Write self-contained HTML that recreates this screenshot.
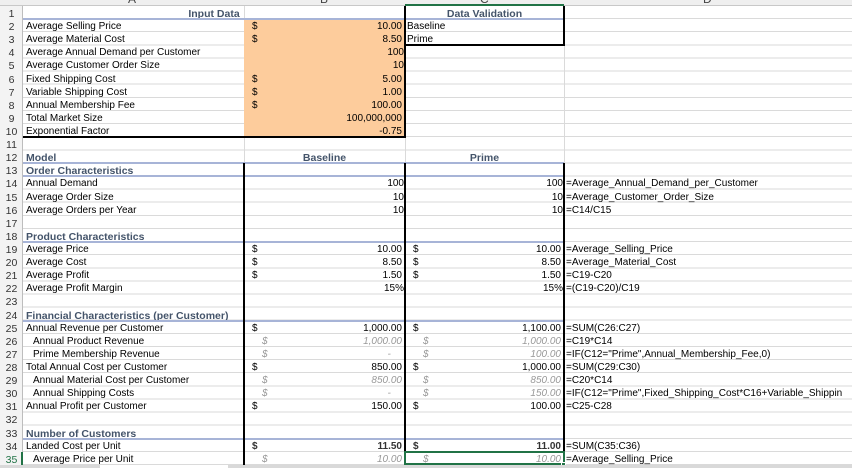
<!DOCTYPE html>
<html><head><meta charset="utf-8"><style>
*{margin:0;padding:0;box-sizing:border-box}
body{width:852px;height:468px;overflow:hidden;background:#fff;font-family:"Liberation Sans",Arial,sans-serif;font-size:10px;color:#000;position:relative}
#hdr{position:absolute;left:0;top:0;width:852px;height:6px;background:#efefef;border-bottom:1px solid #c8c8c8;overflow:hidden}
#hdr span{position:absolute;top:-8px;font-size:12px;color:#444}
#rh{position:absolute;left:0;top:6px;width:23px;height:459px;background:#f3f3f3;border-right:1px solid #bdbdbd}
#lines{position:absolute;left:23px;top:6px;width:829px;height:459px;background:repeating-linear-gradient(to bottom,transparent 0,transparent 12.114px,#dadada 12.114px,#dadada 13.114px)}
.v{position:absolute;top:6px;height:459px;width:1px;background:#dadada}
#g{position:absolute;left:0;top:7px;display:grid;grid-template-columns:23px 221px 161px 159px 288px;grid-auto-rows:13.114px;width:852px}
#g>div{white-space:nowrap;line-height:14px;overflow:visible;position:relative}
.n{text-align:center;color:#333;font-size:10.5px}
.a{padding-left:3px}
.in{padding-left:10px}
.h{font-weight:bold;color:#44546a;padding-left:3px;font-size:10.5px}
.c{text-align:center;font-weight:bold;color:#44546a;font-size:10.5px}
.r{text-align:right;padding-right:3px}
.r0{text-align:right;padding-right:1px}
.d{position:absolute;left:8px;top:0}
.i{font-style:italic;color:#999}
.i .d{left:18px}
.b{font-weight:bold}
.f{padding-left:2px}
.o{background:#fdcc9c}
.k{position:absolute;background:#000}
.bl{position:absolute;height:2px;background:#a7b4d7}
</style></head><body>
<div id="hdr"><span style="left:128px">A</span><span style="left:320px">B</span><span style="left:480px">C</span><span style="left:703px">D</span></div>
<div style="position:absolute;left:405px;top:4px;width:159px;height:2px;background:#217346"></div>
<div id="rh"></div>
<div id="lines"></div>
<div class="v" style="left:244px"></div><div class="v" style="left:405px"></div><div class="v" style="left:564px"></div>
<div style="position:absolute;left:244px;top:19px;width:161px;height:118px" class="o"></div>
<div style="position:absolute;left:21px;top:452px;width:2px;height:13px;background:#217346"></div>
<div id="g">
<div class="n">1</div><div class="c" style="grid-column:2/4">Input Data</div><div class="c">Data Validation</div><div></div>
<div class="n">2</div><div class="a">Average Selling Price</div><div class="r"><span class="d">$</span>10.00</div><div class="f">Baseline</div><div></div>
<div class="n">3</div><div class="a">Average Material Cost</div><div class="r"><span class="d">$</span>8.50</div><div class="f">Prime</div><div></div>
<div class="n">4</div><div class="a">Average Annual Demand per Customer</div><div class="r0">100</div><div></div><div></div>
<div class="n">5</div><div class="a">Average Customer Order Size</div><div class="r0">10</div><div></div><div></div>
<div class="n">6</div><div class="a">Fixed Shipping Cost</div><div class="r"><span class="d">$</span>5.00</div><div></div><div></div>
<div class="n">7</div><div class="a">Variable Shipping Cost</div><div class="r"><span class="d">$</span>1.00</div><div></div><div></div>
<div class="n">8</div><div class="a">Annual Membership Fee</div><div class="r"><span class="d">$</span>100.00</div><div></div><div></div>
<div class="n">9</div><div class="a">Total Market Size</div><div class="r">100,000,000</div><div></div><div></div>
<div class="n">10</div><div class="a">Exponential Factor</div><div class="r">-0.75</div><div></div><div></div>
<div class="n">11</div><div></div><div></div><div></div><div></div>
<div class="n">12</div><div class="h">Model</div><div class="c">Baseline</div><div class="c">Prime</div><div></div>
<div class="n">13</div><div class="h">Order Characteristics</div><div></div><div></div><div></div>
<div class="n">14</div><div class="a">Annual Demand</div><div class="r0">100</div><div class="r0">100</div><div class="f">=Average_Annual_Demand_per_Customer</div>
<div class="n">15</div><div class="a">Average Order Size</div><div class="r0">10</div><div class="r0">10</div><div class="f">=Average_Customer_Order_Size</div>
<div class="n">16</div><div class="a">Average Orders per Year</div><div class="r0">10</div><div class="r0">10</div><div class="f">=C14/C15</div>
<div class="n">17</div><div></div><div></div><div></div><div></div>
<div class="n">18</div><div class="h">Product Characteristics</div><div></div><div></div><div></div>
<div class="n">19</div><div class="a">Average Price</div><div class="r"><span class="d">$</span>10.00</div><div class="r"><span class="d">$</span>10.00</div><div class="f">=Average_Selling_Price</div>
<div class="n">20</div><div class="a">Average Cost</div><div class="r"><span class="d">$</span>8.50</div><div class="r"><span class="d">$</span>8.50</div><div class="f">=Average_Material_Cost</div>
<div class="n">21</div><div class="a">Average Profit</div><div class="r"><span class="d">$</span>1.50</div><div class="r"><span class="d">$</span>1.50</div><div class="f">=C19-C20</div>
<div class="n">22</div><div class="a">Average Profit Margin</div><div class="r0">15%</div><div class="r0">15%</div><div class="f">=(C19-C20)/C19</div>
<div class="n">23</div><div></div><div></div><div></div><div></div>
<div class="n">24</div><div class="h">Financial Characteristics (per Customer)</div><div></div><div></div><div></div>
<div class="n">25</div><div class="a">Annual Revenue per Customer</div><div class="r"><span class="d">$</span>1,000.00</div><div class="r"><span class="d">$</span>1,100.00</div><div class="f">=SUM(C26:C27)</div>
<div class="n">26</div><div class="in">Annual Product Revenue</div><div class="r i"><span class="d">$</span>1,000.00</div><div class="r i"><span class="d">$</span>1,000.00</div><div class="f">=C19*C14</div>
<div class="n">27</div><div class="in">Prime Membership Revenue</div><div class="r i"><span class="d">$</span>-&nbsp;&nbsp;&nbsp;&nbsp;</div><div class="r i"><span class="d">$</span>100.00</div><div class="f">=IF(C12="Prime",Annual_Membership_Fee,0)</div>
<div class="n">28</div><div class="a">Total Annual Cost per Customer</div><div class="r"><span class="d">$</span>850.00</div><div class="r"><span class="d">$</span>1,000.00</div><div class="f">=SUM(C29:C30)</div>
<div class="n">29</div><div class="in">Annual Material Cost per Customer</div><div class="r i"><span class="d">$</span>850.00</div><div class="r i"><span class="d">$</span>850.00</div><div class="f">=C20*C14</div>
<div class="n">30</div><div class="in">Annual Shipping Costs</div><div class="r i"><span class="d">$</span>-&nbsp;&nbsp;&nbsp;&nbsp;</div><div class="r i"><span class="d">$</span>150.00</div><div class="f">=IF(C12="Prime",Fixed_Shipping_Cost*C16+Variable_Shippin</div>
<div class="n">31</div><div class="a">Annual Profit per Customer</div><div class="r"><span class="d">$</span>150.00</div><div class="r"><span class="d">$</span>100.00</div><div class="f">=C25-C28</div>
<div class="n">32</div><div></div><div></div><div></div><div></div>
<div class="n">33</div><div class="h">Number of Customers</div><div></div><div></div><div></div>
<div class="n">34</div><div class="a">Landed Cost per Unit</div><div class="r b" style="color:#333"><span class="d">$</span>11.50</div><div class="r b" style="color:#333"><span class="d">$</span>11.00</div><div class="f">=SUM(C35:C36)</div>
<div class="n" style="color:#217346">35</div><div class="in">Average Price per Unit</div><div class="r i"><span class="d">$</span>10.00</div><div class="r i"><span class="d">$</span>10.00</div><div class="f">=Average_Selling_Price</div>
</div>
<div class="bl" style="left:23px;top:18px;width:541px"></div>
<div class="bl" style="left:23px;top:162px;width:541px"></div>
<div class="bl" style="left:23px;top:175px;width:541px"></div>
<div class="bl" style="left:23px;top:241px;width:541px"></div>
<div class="bl" style="left:23px;top:320px;width:541px"></div>
<div class="bl" style="left:23px;top:438px;width:541px"></div>
<div class="k" style="left:23px;top:136px;width:383px;height:2px"></div>
<div class="k" style="left:404px;top:45px;width:2px;height:93px"></div>
<div class="k" style="left:404px;top:6px;width:2px;height:40px"></div>
<div class="k" style="left:563px;top:6px;width:2px;height:40px"></div>
<div class="k" style="left:404px;top:44px;width:161px;height:2px"></div>
<div class="k" style="left:243px;top:163px;width:2px;height:302px"></div>
<div class="k" style="left:404px;top:163px;width:2px;height:302px"></div>
<div class="k" style="left:563px;top:163px;width:2px;height:302px"></div>
<div style="position:absolute;left:404px;top:451px;width:161px;height:14px;border:2px solid #217346"></div>
<div style="position:absolute;left:561px;top:462px;width:5px;height:5px;background:#217346;border:1px solid #fff"></div>
<div style="position:absolute;left:0;top:465px;width:852px;height:3px;background:#d9d9d9"></div>
<div style="position:absolute;left:100px;top:465px;width:128px;height:3px;background:#fff"></div>
</body></html>
